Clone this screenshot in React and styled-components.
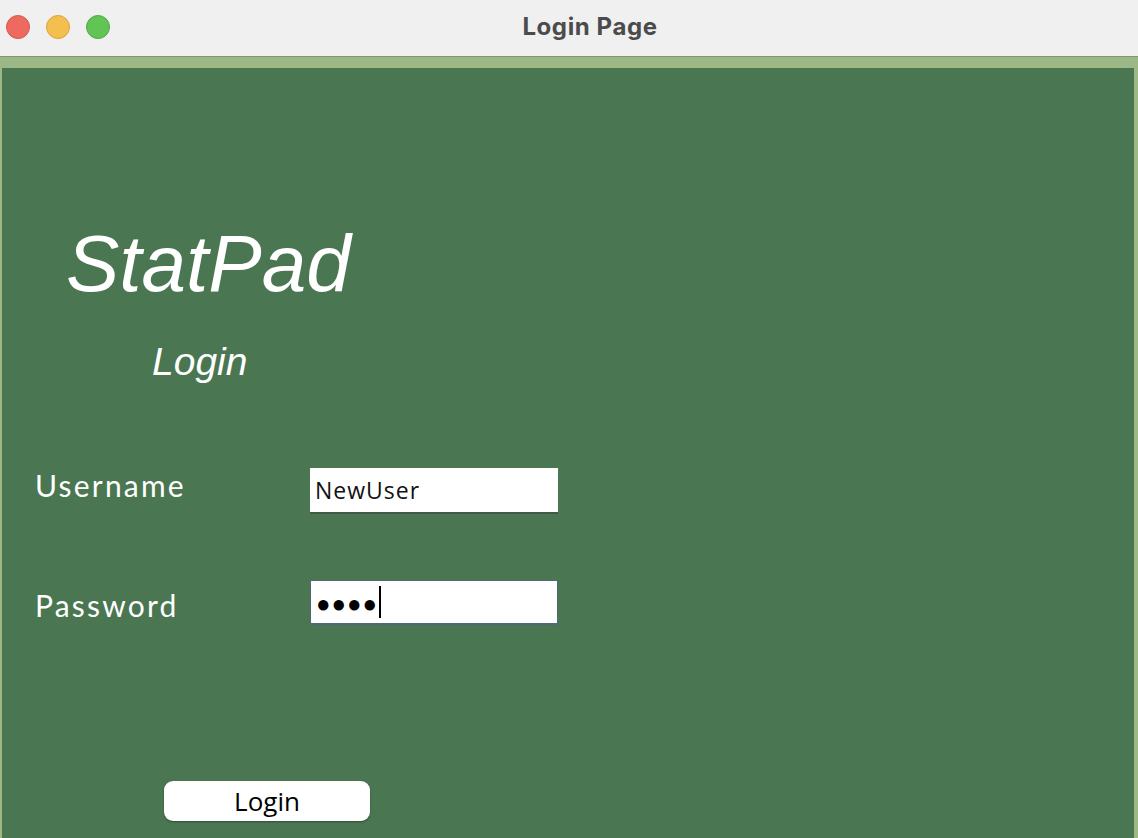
import styled, { createGlobalStyle } from "styled-components";

const Global = createGlobalStyle`
  html, body {
    margin: 0;
    padding: 0;
    width: 1138px;
    height: 838px;
    overflow: hidden;
  }
  * { box-sizing: border-box; }
`;

const Window = styled.div`
  display: flex;
  flex-direction: column;
  width: 1138px;
  height: 838px;
  background: #9db785;
`;

const TitleBar = styled.div`
  position: relative;
  display: flex;
  align-items: center;
  justify-content: center;
  height: 57px;
  flex-shrink: 0;
  background: #f0f0f0;
  border-bottom: 1px solid #7e9a68;
`;

const Lights = styled.div`
  position: absolute;
  left: 6px;
  top: 15px;
  display: flex;
  gap: 16px;
`;

const Light = styled.span`
  width: 24px;
  height: 24px;
  border-radius: 50%;
  background: ${(p) => p.color};
  border: 1px solid ${(p) => p.edge};
`;

const Title = styled.div`
  font-family: "Inter", "Liberation Sans", sans-serif;
  font-weight: 700;
  font-size: 24px;
  letter-spacing: 0.6px;
  color: #4b4b4b;
  margin-left: 42px;
  margin-top: -3px;
`;

const Frame = styled.div`
  flex: 1;
  display: flex;
  padding: 11px 4px 0 2px;
`;

const Panel = styled.div`
  flex: 1;
  display: flex;
  flex-direction: column;
  background: #4a7651;
  padding: 156px 0 0 0;
`;

const Brand = styled.h1`
  margin: 0 0 0 64px;
  font-family: "Liberation Sans", Arial, sans-serif;
  font-style: italic;
  font-weight: 400;
  font-size: 80px;
  line-height: 80px;
  color: #ffffff;
`;

const Heading = styled.h2`
  margin: 39px 0 0 150px;
  font-family: "Liberation Sans", Arial, sans-serif;
  font-style: italic;
  font-weight: 400;
  font-size: 39px;
  line-height: 38px;
  color: #ffffff;
`;

const Form = styled.div`
  display: grid;
  grid-template-columns: 275px 248px;
  row-gap: 66px;
  margin: 87px 0 0 33px;
`;

const Label = styled.label`
  font-family: "Lato", "Open Sans", sans-serif;
  font-size: 30px;
  letter-spacing: 2.2px;
  line-height: 28px;
  color: #ffffff;
  padding-top: ${(p) => p.offset}px;
`;

const Field = styled.div`
  display: flex;
  align-items: center;
  height: ${(p) => p.h}px;
  background: #ffffff;
  padding-left: 5px;
  border: ${(p) => (p.focused ? "1px solid #53657a" : "none")};
  border-bottom: 2px solid ${(p) => (p.focused ? "#53657a" : "#3f5a45")};
  font-family: "Open Sans", "Liberation Sans", sans-serif;
  font-size: 23px;
  letter-spacing: 1px;
  color: #111;
`;

const Dots = styled.span`
  font-size: 24px;
  letter-spacing: 1px;
  color: #000;
`;

const Caret = styled.span`
  width: 2px;
  height: 32px;
  margin-left: 1px;
  background: #000;
`;

const Button = styled.button`
  margin: 156px 0 0 162px;
  width: 206px;
  height: 40px;
  border: none;
  border-radius: 9px;
  background: #ffffff;
  box-shadow: 0 1px 2px rgba(0, 0, 0, 0.35);
  font-family: "Open Sans", "Liberation Sans", sans-serif;
  font-size: 26px;
  color: #000;
  padding: 0;
  line-height: 40px;
`;

export default function App() {
  return (
    <>
      <Global />
      <Window>
        <TitleBar>
          <Lights>
            <Light color="#ee6a5f" edge="#d25a4f" />
            <Light color="#f5bf4f" edge="#d9a340" />
            <Light color="#61c454" edge="#52a846" />
          </Lights>
          <Title>Login Page</Title>
        </TitleBar>
        <Frame>
          <Panel>
            <Brand>StatPad</Brand>
            <Heading>Login</Heading>
            <Form>
              <Label offset={3}>Username</Label>
              <Field h={46}>NewUser</Field>
              <Label offset={11}>Password</Label>
              <Field h={45} focused>
                <Dots>●●●●</Dots>
                <Caret />
              </Field>
            </Form>
            <div>
              <Button>Login</Button>
            </div>
          </Panel>
        </Frame>
      </Window>
    </>
  );
}
